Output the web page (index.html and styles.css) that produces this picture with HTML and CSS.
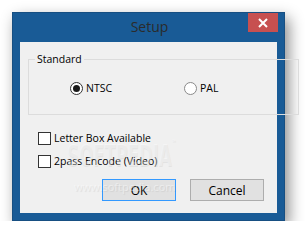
FILE: index.html
```html
<!DOCTYPE html>
<html lang="en">
<head>
    <meta charset="UTF-8">
    <title>Setup</title>
    <link rel="stylesheet" href="styles.css">
</head>
<body>
    <div class="window">
        <div class="titlebar">
            <span></span>
            <div class="title">Setup</div>
            <button class="close-btn">
                <svg width="10" height="10" viewBox="0 0 10 10">
                    <path d="M1 1 L9 9 M9 1 L1 9" stroke="#fff" stroke-width="2"/>
                </svg>
            </button>
        </div>

        <div class="client">
            <fieldset class="group">
                <legend>Standard</legend>
                <div class="radio-row">
                    <label class="radio"><span class="dot checked"></span>NTSC</label>
                    <label class="radio"><span class="dot"></span>PAL</label>
                </div>
            </fieldset>

            <div class="checks">
                <label class="check"><span class="box"></span>Letter Box Available</label>
                <label class="check"><span class="box"></span>2pass Encode (Video)</label>
            </div>

            <div class="buttons">
                <button class="btn btn-default">OK</button>
                <button class="btn">Cancel</button>
            </div>

            <!-- marca de agua -->
            <div class="watermark">SOFTPEDIA<sup>™</sup></div>
            <div class="watermark-url">www.softpedia.com</div>
        </div>
    </div>
</body>
</html>
```

FILE: styles.css
```css
* {
    margin: 0;
    padding: 0;
    box-sizing: border-box;
}

body {
    background: #ffffff;
    font-family: 'Segoe UI', 'Open Sans', sans-serif;
    font-size: 10.5px;
    color: #000000;
    overflow: hidden;
}

.window {
    margin: 12px 0 0 12px;
    width: 273px;
    height: 209px;
    background: #195b96;
    border: 1px solid #174f82;
    box-shadow: 4px 6px 14px rgba(0, 0, 0, 0.45);
    display: flex;
    flex-direction: column;
}

.titlebar {
    height: 29px;
    display: grid;
    grid-template-columns: 1fr auto 1fr;
    align-items: start;
}

.title {
    font-size: 14px;
    color: #2b2b2b;
    line-height: 28px;
    padding-left: 2px;
}

.close-btn {
    justify-self: end;
    margin-right: 6px;
    width: 30px;
    height: 19px;
    background: #c75050;
    border: none;
    display: flex;
    align-items: center;
    justify-content: center;
}

.client {
    position: relative;
    margin: 0 7px 7px;
    flex: 1;
    background: #f0f0f0;
    padding: 10px 9px 0 8px;
    display: flex;
    flex-direction: column;
}

.group {
    border: 1px solid #dcdcdc;
    height: 63px;
}

.group legend {
    margin-left: 6px;
    padding: 0 2px;
    line-height: 14px;
}

.radio-row {
    display: flex;
    padding: 15px 0 0 41px;
}

.radio {
    display: flex;
    align-items: center;
    gap: 3px;
    width: 114px;
}

.dot {
    width: 13px;
    height: 13px;
    border-radius: 50%;
    border: 1px solid #8a8a8a;
    background: #ffffff;
    display: flex;
    align-items: center;
    justify-content: center;
}

.dot.checked {
    border-color: #333333;
}

.dot.checked::after {
    content: '';
    width: 7px;
    height: 7px;
    border-radius: 50%;
    background: #1a1a1a;
}

.checks {
    display: flex;
    flex-direction: column;
    gap: 10px;
    padding: 17px 0 0 10px;
}

.check {
    display: flex;
    align-items: center;
    gap: 3px;
    line-height: 13px;
}

.box {
    width: 13px;
    height: 13px;
    border: 1px solid #333333;
    background: #ffffff;
}

.buttons {
    display: flex;
    justify-content: flex-end;
    gap: 14px;
    padding: 11px 4px 0 0;
}

.btn {
    width: 74px;
    height: 22px;
    font-family: inherit;
    font-size: 12px;
    background: #e1e1e1;
    border: 1px solid #adadad;
    color: #000000;
}

.btn-default {
    border-color: #3399ff;
}

.watermark {
    position: absolute;
    left: 47px;
    top: 96px;
    font-family: 'DejaVu Sans', sans-serif;
    font-size: 30px;
    font-weight: bold;
    transform: scaleX(0.55);
    transform-origin: left top;
    color: rgba(255, 255, 255, 0.35);
    text-shadow: 1px 1px 1px rgba(0, 0, 0, 0.06);
    pointer-events: none;
}

.watermark sup {
    font-size: 9px;
    vertical-align: top;
}

.watermark-url {
    position: absolute;
    left: 54px;
    top: 137px;
    font-size: 11px;
    color: rgba(255, 255, 255, 0.45);
    text-shadow: 1px 1px 1px rgba(0, 0, 0, 0.08);
    pointer-events: none;
}
```
